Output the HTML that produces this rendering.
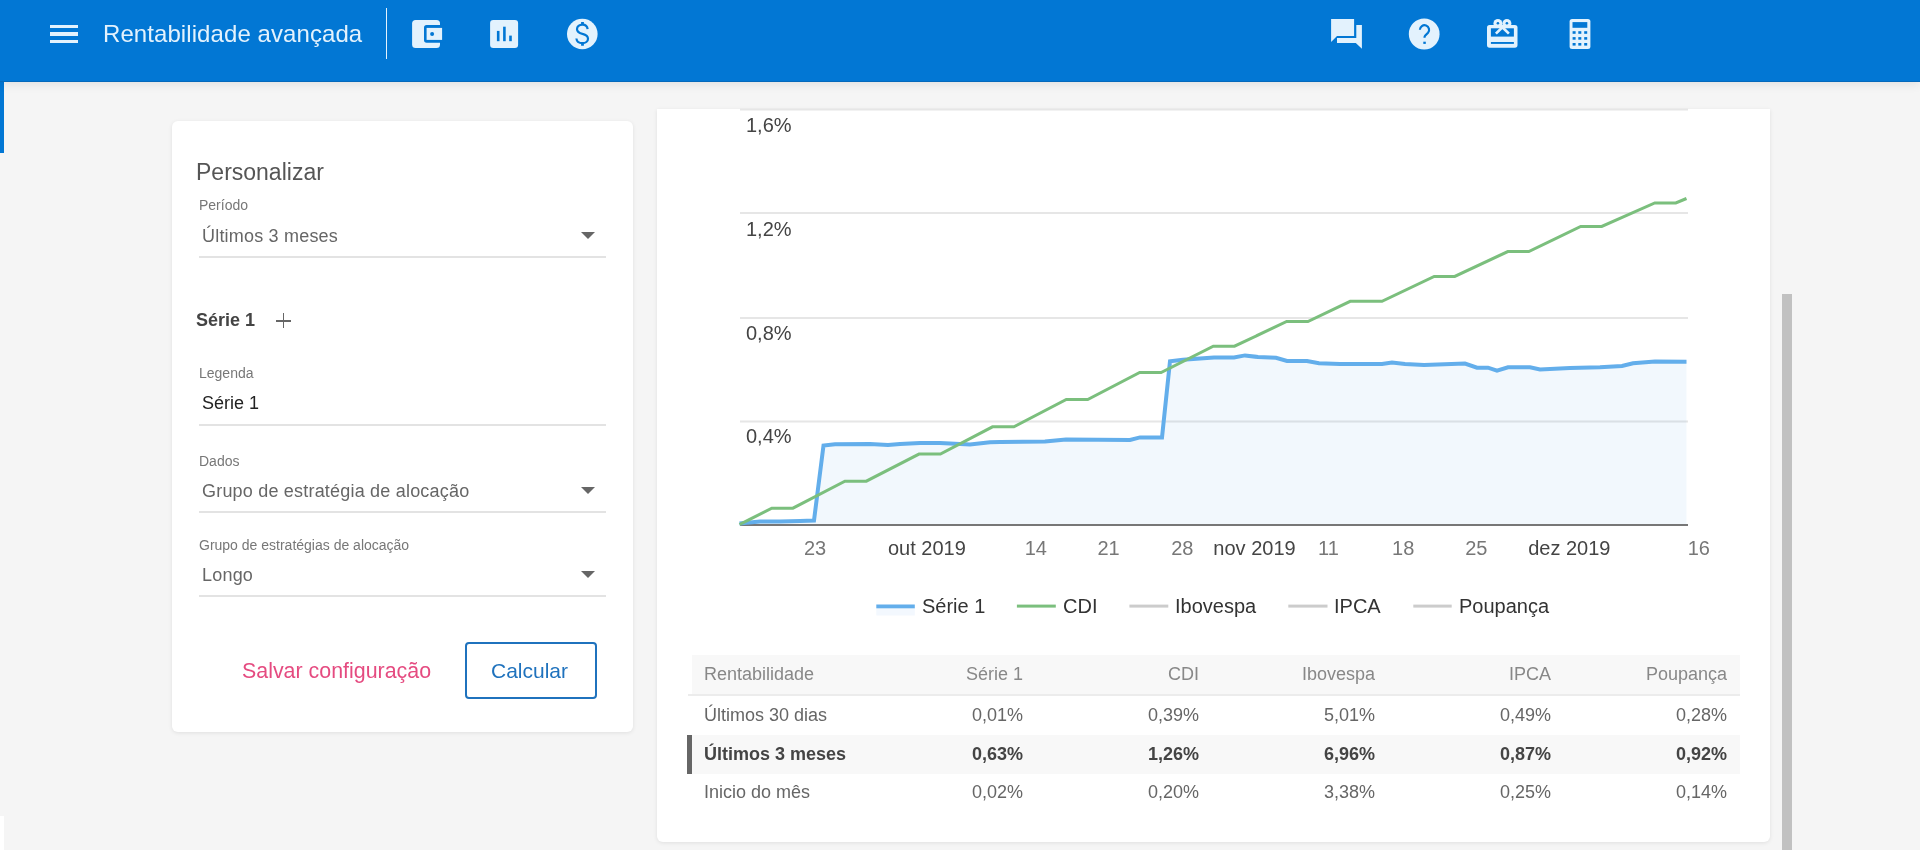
<!DOCTYPE html>
<html lang="pt">
<head>
<meta charset="utf-8">
<title>Rentabilidade avançada</title>
<style>
html,body{margin:0;padding:0;}
body{width:1920px;height:850px;overflow:hidden;background:#f5f5f5;font-family:"Liberation Sans",sans-serif;position:relative;}
.abs{position:absolute;}
#hdr{left:0;top:0;width:1920px;height:82px;background:#0277d4;box-shadow:0 2px 10px rgba(0,0,0,.09);z-index:5;border-bottom:1px solid #0569bb;box-sizing:border-box;}
#hdr .title{left:103px;top:19.5px;font-size:24px;line-height:28px;color:#e3f2fd;white-space:nowrap;letter-spacing:0.08px;}
#hdr .div{left:386px;top:8px;width:1px;height:51px;background:#e3f2fd;}
.ico{position:absolute;width:36px;height:36px;}
#strip{left:0;top:82px;width:4px;height:71px;background:#0277d4;}
.card{position:absolute;background:#fff;border-radius:4px;box-shadow:0 1px 4px rgba(0,0,0,.09);}
#left{left:172px;top:121px;width:461px;height:611px;border-radius:6px;}
#right{left:657px;top:109px;width:1113px;height:733px;border-radius:0 0 6px 6px;}
.t{position:absolute;white-space:nowrap;}
.lbl{font-size:14px;color:#777;}
.val{font-size:18px;color:#666;letter-spacing:0.2px;}
.uline{position:absolute;height:2px;background:#e3e3e3;}
.arrow{position:absolute;width:0;height:0;border-left:7px solid transparent;border-right:7px solid transparent;border-top:7px solid #666;}
#scroll{left:1782px;top:294px;width:10px;height:556px;background:#c1c1c1;}
</style>
</head>
<body>
<div id="root" style="position:absolute;left:0;top:0;width:1920px;height:850px;will-change:transform">
<div id="hdr" class="abs">
  <!-- hamburger -->
  <div class="abs" style="left:50px;top:25px;width:28px;height:3px;background:#e3f2fd"></div>
  <div class="abs" style="left:50px;top:32px;width:28px;height:4px;background:#e3f2fd"></div>
  <div class="abs" style="left:50px;top:40px;width:28px;height:3px;background:#e3f2fd"></div>
  <div class="abs title">Rentabilidade avançada</div>
  <div class="abs div"></div>
<svg class="abs" style="left:0;top:0" width="1920" height="82" viewBox="0 0 1920 82">
<!-- wallet -->
<rect x="412.1" y="19.9" width="27.9" height="28" rx="3.5" fill="#e3f2fd"/>
<rect x="424" y="25.1" width="22" height="17.6" rx="2.6" fill="#0277d4"/>
<rect x="426.6" y="27.9" width="15.5" height="12" fill="#e3f2fd"/>
<circle cx="432.1" cy="34" r="2" fill="#0277d4"/>
<!-- assessment -->
<rect x="490.1" y="19.9" width="28" height="28" rx="3.2" fill="#e3f2fd"/>
<g fill="#0277d4"><rect x="496.9" y="30.9" width="2.6" height="10.3"/><rect x="503.1" y="26.7" width="2.6" height="14.5"/><rect x="509.2" y="35.6" width="2.6" height="5.6"/></g>
<!-- dollar -->
<circle cx="582.3" cy="34" r="15.3" fill="#e3f2fd"/>
<g fill="none" stroke="#0277d4" stroke-width="2.2">
<path d="M587.6,29.2 C587.4,26.3 585.3,24.6 582.4,24.6 C579.3,24.6 577,26.4 577,29.2 C577,32.3 580,33.2 582.5,33.9 C585.3,34.6 588,35.6 588,38.7 C588,41.5 585.5,43.2 582.4,43.2 C579,43.2 576.7,41.3 576.4,38.5"/>
<path d="M582.5,22 V24.8 M582.5,43 V45.8" stroke-width="2.8"/>
</g>
<!-- forum -->
<polygon points="1331.1,19 1354.1,19 1354.1,36.1 1337,36.1 1331.1,41.9" fill="#e3f2fd"/>
<polygon points="1356.3,24.9 1361.9,24.9 1361.9,48.8 1355.8,43.1 1337,43.1 1337,38.1 1356.3,38.1" fill="#e3f2fd"/>
<!-- help -->
<circle cx="1424.2" cy="34" r="15.4" fill="#e3f2fd"/>
<path d="M1419.9,29.8 A4.6,4.6 0 1 1 1428,32.8 L1425.3,35.6 Q1424.5,36.4 1424.5,37.7" fill="none" stroke="#0277d4" stroke-width="2.2"/>
<rect x="1423.3" y="41.7" width="2.5" height="2.2" fill="#0277d4"/>
<!-- gift card -->
<rect x="1487" y="24.9" width="30.5" height="22.8" rx="2.6" fill="#e3f2fd"/>
<rect x="1490.9" y="28.3" width="23" height="8.3" fill="#0277d4"/>
<rect x="1490.9" y="42" width="23" height="1.9" fill="#0277d4"/>
<circle cx="1497.9" cy="23.4" r="4.5" fill="#e3f2fd"/>
<circle cx="1506.9" cy="23.4" r="4.5" fill="#e3f2fd"/>
<circle cx="1497.9" cy="23.2" r="1.3" fill="#0277d4"/>
<circle cx="1506.9" cy="23.2" r="1.3" fill="#0277d4"/>
<path d="M1502.4,27.2 L1495.9,33.6 M1502.4,27.2 L1508.9,33.6" stroke="#e3f2fd" stroke-width="2.7" fill="none"/>
<!-- calculator -->
<rect x="1569.6" y="19" width="20.8" height="30" rx="2.5" fill="#e3f2fd"/>
<rect x="1572.5" y="22.1" width="14.8" height="5.7" fill="#0277d4"/>
<g fill="#0277d4">
<rect x="1572.6" y="31.2" width="3" height="2.6"/><rect x="1578.3" y="31.2" width="3" height="2.6"/><rect x="1584.2" y="31.2" width="3" height="2.6"/>
<rect x="1572.6" y="37.1" width="3" height="2.6"/><rect x="1578.3" y="37.1" width="3" height="2.6"/><rect x="1584.2" y="37.1" width="3" height="2.6"/>
<rect x="1572.6" y="43" width="3" height="2.6"/><rect x="1578.3" y="43" width="3" height="2.6"/><rect x="1584.2" y="43" width="3" height="2.6"/>
</g>
</svg>

</div>
<div id="strip" class="abs"></div>
<div class="abs" style="left:0;top:816px;width:4px;height:34px;background:#fff"></div>

<div id="left" class="card">
</div>


<div class="t" style="left:196px;top:160.5px;font-size:23px;line-height:23px;color:#555">Personalizar</div>
<div class="t lbl" style="left:199px;top:197.5px;line-height:14px">Período</div>
<div class="t val" style="left:202px;top:227.4px;line-height:18px">Últimos 3 meses</div>
<div class="arrow" style="left:580.5px;top:232px"></div>
<div class="uline" style="left:199px;top:256px;width:407px"></div>
<div class="t" style="left:196px;top:310.7px;font-size:18px;line-height:18px;font-weight:bold;color:#444">Série 1</div>
<div class="abs" style="left:276px;top:320px;width:15px;height:1.5px;background:#666"></div>
<div class="abs" style="left:282.8px;top:313px;width:1.5px;height:15px;background:#666"></div>
<div class="t lbl" style="left:199px;top:366.3px;line-height:14px">Legenda</div>
<div class="t val" style="left:202px;top:393.8px;line-height:18px;color:#222;letter-spacing:0">Série 1</div>
<div class="uline" style="left:199px;top:424px;width:407px"></div>
<div class="t lbl" style="left:199px;top:453.5px;line-height:14px">Dados</div>
<div class="t val" style="left:202px;top:482.3px;line-height:18px">Grupo de estratégia de alocação</div>
<div class="arrow" style="left:580.5px;top:487px"></div>
<div class="uline" style="left:199px;top:511px;width:407px"></div>
<div class="t lbl" style="left:199px;top:537.6px;line-height:14px">Grupo de estratégias de alocação</div>
<div class="t val" style="left:202px;top:566.4px;line-height:18px">Longo</div>
<div class="arrow" style="left:580.5px;top:571px"></div>
<div class="uline" style="left:199px;top:594.5px;width:407px"></div>
<div class="t" style="left:242px;top:660.8px;font-size:21.4px;line-height:21px;color:#e54b80">Salvar configuração</div>
<div class="abs" style="left:465px;top:642px;width:128px;height:53px;border:2px solid #1f72bd;border-radius:4px"></div>
<div class="t" style="left:491px;top:659.8px;font-size:21px;line-height:21px;color:#1f72bd">Calcular</div>

<div id="right" class="card">
</div>

<svg class="abs" style="left:0;top:0;z-index:3" width="1920" height="850" viewBox="0 0 1920 850">
<g stroke="#e6e6e6" stroke-width="2">
<line x1="740" y1="109.5" x2="1688" y2="109.5"/>
<line x1="740" y1="213" x2="1688" y2="213"/>
<line x1="740" y1="318" x2="1688" y2="318"/>
<line x1="740" y1="421.5" x2="1688" y2="421.5"/>
</g>
<polygon points="739.5,523.5 760,521.5 780,521.5 800,521 814,520.5 823.5,445.5 835,444.3 870,444 888,445 900,444 920,443 940,443 970,444.5 990,442.2 1000,442 1045,441.6 1066,439.5 1130,440 1140,437.4 1162,437.4 1170,361.2 1183,359.8 1200,358.5 1214,357.5 1234,357.5 1245,355.4 1258,357 1276,357.8 1287,361 1307,361 1319,363.2 1340,364 1382,364 1392,362.5 1405,364 1424,365 1465,363.5 1477,367.7 1488,367.7 1497,370.7 1508,367.3 1530,367.3 1540,369.5 1570,368 1600,367.3 1622,366 1633,363.3 1655,361.6 1686.5,361.8 1686.5,525 739.5,525" fill="#3d8fe0" fill-opacity="0.065"/>
<line x1="740" y1="525" x2="1688" y2="525" stroke="#777" stroke-width="2"/>
<polyline points="739.5,523.5 760,521.5 780,521.5 800,521 814,520.5 823.5,445.5 835,444.3 870,444 888,445 900,444 920,443 940,443 970,444.5 990,442.2 1000,442 1045,441.6 1066,439.5 1130,440 1140,437.4 1162,437.4 1170,361.2 1183,359.8 1200,358.5 1214,357.5 1234,357.5 1245,355.4 1258,357 1276,357.8 1287,361 1307,361 1319,363.2 1340,364 1382,364 1392,362.5 1405,364 1424,365 1465,363.5 1477,367.7 1488,367.7 1497,370.7 1508,367.3 1530,367.3 1540,369.5 1570,368 1600,367.3 1622,366 1633,363.3 1655,361.6 1686.5,361.8" fill="none" stroke="#63aeeb" stroke-width="4" stroke-linejoin="miter"/>
<polyline points="739.5,524.5 771.8,508.2 792.9,508.2 844.9,481.2 866.3,481.2 919,454.1 940.4,454.1 992.5,426.8 1013.9,426.8 1066.3,399.5 1087.7,399.5 1139.7,372.5 1161.1,372.5 1213.3,346.2 1234.5,346.2 1286.7,321.5 1307.9,321.5 1350.2,301.3 1382,301.3 1434.2,276.4 1454.7,276.4 1507.8,251.6 1528.8,251.6 1580.7,226.4 1601.7,226.4 1654.8,203 1675.8,203 1686.5,198.5" fill="none" stroke="#7bbf7d" stroke-width="3" stroke-linejoin="miter"/>
<g font-family="Liberation Sans" font-size="20" fill="#444">
<text x="746" y="131.8">1,6%</text>
<text x="746" y="235.8">1,2%</text>
<text x="746" y="339.5">0,8%</text>
<text x="746" y="443.3">0,4%</text>
</g>
<g font-family="Liberation Sans" font-size="20" text-anchor="middle">
<text x="815" y="554.5" fill="#777">23</text>
<text x="926.9" y="554.5" fill="#444">out 2019</text>
<text x="1035.8" y="554.5" fill="#777">14</text>
<text x="1108.5" y="554.5" fill="#777">21</text>
<text x="1182.3" y="554.5" fill="#777">28</text>
<text x="1254.5" y="554.5" fill="#444">nov 2019</text>
<text x="1328.5" y="554.5" fill="#777">11</text>
<text x="1403.2" y="554.5" fill="#777">18</text>
<text x="1476.3" y="554.5" fill="#777">25</text>
<text x="1569.3" y="554.5" fill="#444">dez 2019</text>
<text x="1698.8" y="554.5" fill="#777">16</text>
</g>
<!-- legend -->
<rect x="876.3" y="608" width="38.5" height="7.5" fill="#f3f8fe"/>
<rect x="876.3" y="604.5" width="38.5" height="3.8" fill="#63aeeb"/>
<rect x="1016.9" y="604.6" width="38.9" height="3" fill="#7bbf7d"/>
<rect x="1129.4" y="604.6" width="38.9" height="3" fill="#cccccc"/>
<rect x="1288.3" y="604.6" width="39.2" height="3" fill="#cccccc"/>
<rect x="1413.3" y="604.6" width="38.4" height="3" fill="#cccccc"/>
<g font-family="Liberation Sans" font-size="20" fill="#333">
<text x="922" y="613">Série 1</text>
<text x="1063" y="613">CDI</text>
<text x="1175" y="613">Ibovespa</text>
<text x="1334" y="613">IPCA</text>
<text x="1459" y="613">Poupança</text>
</g>
</svg>
<div class="abs" style="left:692px;top:655px;width:1048px;height:39.5px;background:#f8f8f8;z-index:3"></div>
<div class="abs" style="left:688px;top:694.2px;width:1052px;height:1.8px;background:#ececec;z-index:3"></div>
<div class="abs" style="left:692px;top:735px;width:1048px;height:38.6px;background:#f8f8f8;z-index:3"></div>
<div class="abs" style="left:687px;top:735px;width:5px;height:38.6px;background:#666;z-index:3"></div>
<svg class="abs" style="left:0;top:0;z-index:4" width="1920" height="850">
<g font-family="Liberation Sans" font-size="18" fill="#888">
<text x="704" y="679.8">Rentabilidade</text>
<g text-anchor="end"><text x="1023" y="679.8">Série 1</text><text x="1199" y="679.8">CDI</text><text x="1375" y="679.8">Ibovespa</text><text x="1551" y="679.8">IPCA</text><text x="1727" y="679.8">Poupança</text></g>
</g>
<g font-family="Liberation Sans" font-size="18" fill="#666">
<text x="704" y="720.5">Últimos 30 dias</text>
<g text-anchor="end"><text x="1023" y="720.5">0,01%</text><text x="1199" y="720.5">0,39%</text><text x="1375" y="720.5">5,01%</text><text x="1551" y="720.5">0,49%</text><text x="1727" y="720.5">0,28%</text></g>
</g>
<g font-family="Liberation Sans" font-size="18" fill="#444" font-weight="bold">
<text x="704" y="759.6">Últimos 3 meses</text>
<g text-anchor="end"><text x="1023" y="759.6">0,63%</text><text x="1199" y="759.6">1,26%</text><text x="1375" y="759.6">6,96%</text><text x="1551" y="759.6">0,87%</text><text x="1727" y="759.6">0,92%</text></g>
</g>
<g font-family="Liberation Sans" font-size="18" fill="#666">
<text x="704" y="798.4">Inicio do mês</text>
<g text-anchor="end"><text x="1023" y="798.4">0,02%</text><text x="1199" y="798.4">0,20%</text><text x="1375" y="798.4">3,38%</text><text x="1551" y="798.4">0,25%</text><text x="1727" y="798.4">0,14%</text></g>
</g>
</svg>

<div id="scroll" class="abs"></div>
</div>
</body>
</html>
